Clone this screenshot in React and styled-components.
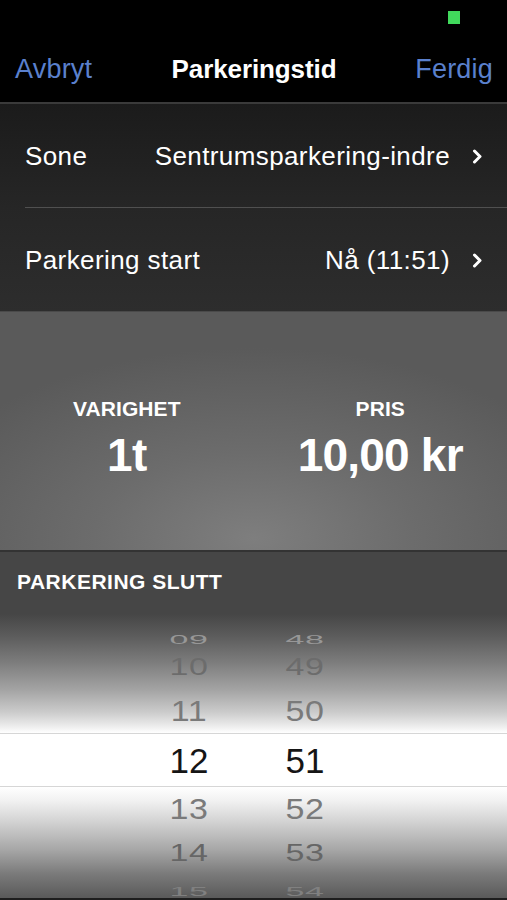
import React from 'react';
import styled, { createGlobalStyle } from 'styled-components';

const GlobalStyle = createGlobalStyle`
  html, body {
    margin: 0;
    padding: 0;
    background: #000;
  }
  body {
    font-family: "Liberation Sans", Arial, sans-serif;
    -webkit-font-smoothing: antialiased;
  }
`;

const Screen = styled.div`
  width: 507px;
  height: 900px;
  overflow: hidden;
  display: flex;
  flex-direction: column;
  background: #000;
`;

const StatusBar = styled.div`
  height: 37px;
  flex-shrink: 0;
  display: flex;
  justify-content: flex-end;
  padding: 11px 47px 0 0;
  box-sizing: border-box;
`;

const Battery = styled.span`
  width: 12px;
  height: 13px;
  background: #41d95c;
`;

const NavBar = styled.div`
  height: 65px;
  flex-shrink: 0;
  display: grid;
  grid-template-columns: 1fr auto 1fr;
  align-items: center;
  padding: 0 14px 0 15px;
  border-bottom: 2px solid #3a3a3a;
`;

const NavButton = styled.span`
  font-size: 27px;
  color: #5a80cd;
  justify-self: ${(p) => (p.$right ? 'end' : 'start')};
  letter-spacing: 0.2px;
`;

const NavTitle = styled.span`
  font-size: 26px;
  font-weight: 700;
  color: #fff;
  letter-spacing: -0.1px;
`;

const List = styled.div`
  height: 207px;
  flex-shrink: 0;
  display: flex;
  flex-direction: column;
  background: linear-gradient(180deg, #1b1b1b 0%, #262626 50%, #2d2d2d 100%);
`;

const RowWrap = styled.div`
  flex: 1;
  display: flex;
  flex-direction: column;
  padding-left: ${(p) => (p.$inset ? '25px' : '0')};
`;

const Row = styled.div`
  flex: 1;
  display: flex;
  align-items: center;
  padding: 3px 24px 0 ${(p) => (p.$inset ? '0' : '25px')};
  font-size: 26px;
  color: #fff;
  letter-spacing: 0.4px;
  border-bottom: ${(p) => (p.$divider ? '1px solid #505050' : 'none')};
`;

const RowLabel = styled.span`
  flex: 1;
`;

const RowValue = styled.span`
  margin-right: 22px;
`;

const Chevron = () => (
  <svg width="11" height="15" viewBox="0 0 11 15">
    <polyline
      points="2.5,2 8,7.5 2.5,13"
      fill="none"
      stroke="#fff"
      strokeWidth="3"
      strokeLinecap="round"
      strokeLinejoin="round"
    />
  </svg>
);

const Stats = styled.div`
  height: 238px;
  flex-shrink: 0;
  display: grid;
  grid-template-columns: 1fr 1fr;
  align-items: center;
  border-top: 1px solid #4a4a4a;
  background: radial-gradient(ellipse 70% 80% at 50% 95%, #7e7e7e 0%, #6c6c6c 45%, #5a5a5a 100%);
`;

const Stat = styled.div`
  display: flex;
  flex-direction: column;
  align-items: center;
  color: #fff;
  padding-top: 12px;
`;

const StatLabel = styled.span`
  font-size: 21px;
  font-weight: 700;
  letter-spacing: 0.1px;
`;

const StatValue = styled.span`
  font-size: 46px;
  font-weight: 700;
  letter-spacing: -0.8px;
  line-height: 1;
  margin-top: 11px;
`;

const EndSection = styled.div`
  flex: 1;
  display: flex;
  flex-direction: column;
  border-top: 2px solid #333;
`;

const SectionHeader = styled.div`
  height: 62px;
  flex-shrink: 0;
  display: flex;
  align-items: center;
  padding: 0 0 2px 17px;
  box-sizing: border-box;
  background: #464646;
  color: #fff;
  font-size: 21px;
  font-weight: 700;
  letter-spacing: 0.5px;
`;

const Picker = styled.div`
  flex: 1;
  display: flex;
  flex-direction: column;
  padding: 9px 0 0;
  overflow: hidden;
  border-bottom: 2px solid #1e1e1e;
  background: linear-gradient(
    180deg,
    #464646 0px,
    #5c5c5c 22px,
    #7c7c7c 48px,
    #a4a4a4 76px,
    #cbcbcb 98px,
    #ececec 112px,
    #fff 119px,
    #fff 173px,
    #f1f1f1 187px,
    #d2d2d2 208px,
    #a6a6a6 236px,
    #7a7a7a 260px,
    #5a5a5a 284px
  );
`;

const PickerRow = styled.div`
  height: ${(p) => p.$h}px;
  flex-shrink: 0;
  display: grid;
  grid-template-columns: 70px 70px;
  column-gap: 46px;
  padding-left: 154px;
  align-items: center;
  box-sizing: border-box;
  background: ${(p) => (p.$selected ? '#fff' : 'transparent')};
  border-top: ${(p) => (p.$selected ? '1px solid #d6d6d6' : 'none')};
  border-bottom: ${(p) => (p.$selected ? '1px solid #d6d6d6' : 'none')};
`;

const Digit = styled.span`
  text-align: center;
  font-size: ${(p) => (p.$selected ? 35 : 34)}px;
  line-height: 1;
  color: ${(p) => p.$tone};
  transform: scaleY(${(p) => p.$scale});
  letter-spacing: ${(p) => (p.$selected ? '0' : '0.5px')};
`;

const pickerRows = [
  { h: '09', m: '48', height: 22, scale: 0.36, tone: '#979797' },
  { h: '10', m: '49', height: 44, scale: 0.68, tone: '#6c6c6c' },
  { h: '11', m: '50', height: 44, scale: 0.86, tone: '#7a7a7a' },
  { h: '12', m: '51', height: 54, scale: 1, tone: '#151515', selected: true },
  { h: '13', m: '52', height: 44, scale: 0.86, tone: '#7a7a7a' },
  { h: '14', m: '53', height: 44, scale: 0.68, tone: '#666' },
  { h: '15', m: '54', height: 16, scale: 0.36, tone: '#808080' },
];

export default function App() {
  return (
    <Screen>
      <GlobalStyle />
      <StatusBar>
        <Battery />
      </StatusBar>
      <NavBar>
        <NavButton>Avbryt</NavButton>
        <NavTitle>Parkeringstid</NavTitle>
        <NavButton $right>Ferdig</NavButton>
      </NavBar>
      <List>
        <RowWrap $inset>
          <Row $divider $inset>
            <RowLabel>Sone</RowLabel>
            <RowValue>Sentrumsparkering-indre</RowValue>
            <Chevron />
          </Row>
        </RowWrap>
        <RowWrap>
          <Row>
            <RowLabel>Parkering start</RowLabel>
            <RowValue>Nå (11:51)</RowValue>
            <Chevron />
          </Row>
        </RowWrap>
      </List>
      <Stats>
        <Stat>
          <StatLabel>VARIGHET</StatLabel>
          <StatValue>1t</StatValue>
        </Stat>
        <Stat>
          <StatLabel>PRIS</StatLabel>
          <StatValue>10,00 kr</StatValue>
        </Stat>
      </Stats>
      <EndSection>
        <SectionHeader>PARKERING SLUTT</SectionHeader>
        <Picker>
          {pickerRows.map((r) => (
            <PickerRow key={r.h} $h={r.height} $selected={r.selected}>
              <Digit $scale={r.scale} $tone={r.tone} $selected={r.selected}>
                {r.h}
              </Digit>
              <Digit $scale={r.scale} $tone={r.tone} $selected={r.selected}>
                {r.m}
              </Digit>
            </PickerRow>
          ))}
        </Picker>
      </EndSection>
    </Screen>
  );
}
